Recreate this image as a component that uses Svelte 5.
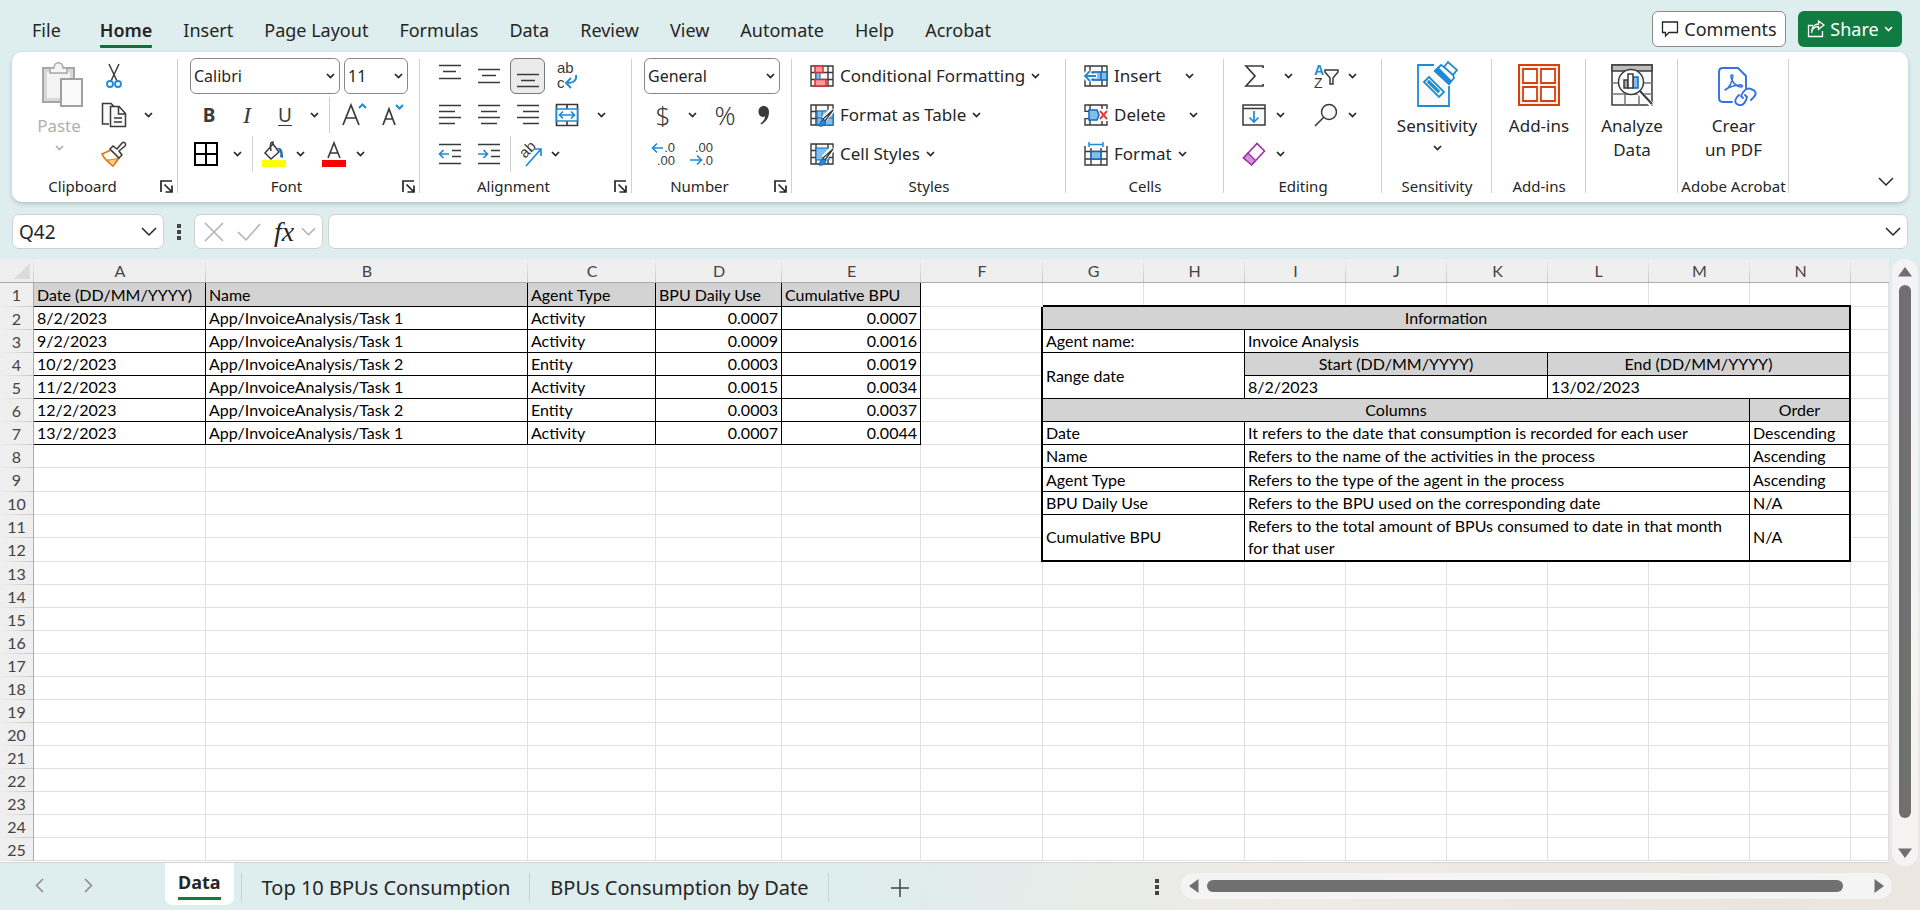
<script lang="ts">
  type Cell = { text?: string; cols?: number; rows?: number; cls?: string };

  const tabs = ['File', 'Home', 'Insert', 'Page Layout', 'Formulas', 'Data', 'Review', 'View', 'Automate', 'Help', 'Acrobat'];
  const letters = ['A', 'B', 'C', 'D', 'E', 'F', 'G', 'H', 'I', 'J', 'K', 'L', 'M', 'N'];
  const sheets = ['Top 10 BPUs Consumption', 'BPUs Consumption by Date'];

  const usage = [
    ['Date (DD/MM/YYYY)', 'Name', 'Agent Type', 'BPU Daily Use', 'Cumulative BPU'],
    ['8/2/2023', 'App/InvoiceAnalysis/Task 1', 'Activity', '0.0007', '0.0007'],
    ['9/2/2023', 'App/InvoiceAnalysis/Task 1', 'Activity', '0.0009', '0.0016'],
    ['10/2/2023', 'App/InvoiceAnalysis/Task 2', 'Entity', '0.0003', '0.0019'],
    ['11/2/2023', 'App/InvoiceAnalysis/Task 1', 'Activity', '0.0015', '0.0034'],
    ['12/2/2023', 'App/InvoiceAnalysis/Task 2', 'Entity', '0.0003', '0.0037'],
    ['13/2/2023', 'App/InvoiceAnalysis/Task 1', 'Activity', '0.0007', '0.0044']
  ];

  function entry(name: string, text: string, order: string, rows = 1): Cell[] {
    const end = rows > 1 ? ' last' : '';
    return [
      { text: name, cols: 2, rows, cls: 'box' + end },
      { text, cols: 5, rows, cls: 'box' + end },
      { text: order, rows, cls: 'box edge' + end }
    ];
  }

  // columns G to N, keyed by row number
  const info: Record<number, Cell[]> = {
    1: letters.slice(6).map(() => ({ cls: 'top' })),
    2: [{ text: 'Information', cols: 8, cls: 'box head mid edge' }],
    3: [
      { text: 'Agent name:', cols: 2, cls: 'box' },
      { text: 'Invoice Analysis', cols: 6, cls: 'box edge' }
    ],
    4: [
      { text: 'Range date', cols: 2, rows: 2, cls: 'box' },
      { text: 'Start (DD/MM/YYYY)', cols: 3, cls: 'box head mid' },
      { text: 'End (DD/MM/YYYY)', cols: 3, cls: 'box head mid edge' }
    ],
    5: [
      { text: '8/2/2023', cols: 3, cls: 'box' },
      { text: '13/02/2023', cols: 3, cls: 'box edge' }
    ],
    6: [
      { text: 'Columns', cols: 7, cls: 'box head mid' },
      { text: 'Order', cls: 'box head mid edge' }
    ],
    7: entry('Date', 'It refers to the date that consumption is recorded for each user', 'Descending'),
    8: entry('Name', 'Refers to the name of the activities in the process', 'Ascending'),
    9: entry('Agent Type', 'Refers to the type of the agent in the process', 'Ascending'),
    10: entry('BPU Daily Use', 'Refers to the BPU used on the corresponding date', 'N/A'),
    11: entry('Cumulative BPU', 'Refers to the total amount of BPUs consumed to date in that month for that user', 'N/A', 2),
    12: []
  };

  function cellsFor(row: number): Cell[] {
    const left: Cell[] = letters.slice(0, 5).map((_, i) => {
      const text = usage[row - 1]?.[i];
      if (!text) return {};
      return { text, cls: 'box' + (row === 1 ? ' head' : i > 2 ? ' num' : '') };
    });
    left.push({ cls: row > 1 && row < 13 ? 'edge side' : '' });
    return [...left, ...(info[row] ?? letters.slice(6).map(() => ({}))), {}];
  }

  const rows = Array.from({ length: 25 }, (_, i) => i + 1);
</script>

{#snippet chevron()}
  <svg class="chev" width="9" height="6" viewBox="0 0 9 6"><path d="M1 1l3.5 3.5L8 1" /></svg>
{/snippet}

{#snippet bigChevron()}
  <svg class="chev" width="16" height="9" viewBox="0 0 16 9"><path d="M1 1l7 7 7-7" /></svg>
{/snippet}

{#snippet more(label: string)}
  <button class="drop" aria-label={label}>{@render chevron()}</button>
{/snippet}

{#snippet lines(label: string, d: string, active = false)}
  <button class="tool wide" class:active aria-label={label}>
    <svg width="24" height="24" viewBox="0 0 24 24" class="dark"><path {d} /></svg>
  </button>
{/snippet}

{#snippet footer(name: string, launcher = false)}
  <div class="footer">
    <span>{name}</span>
    {#if launcher}
      <button class="launch" aria-label="{name} settings">
        <svg width="13" height="13" viewBox="0 0 13 13"><path d="M1 12V1h11M4.500 4.500l7 7M12 5.500V12H5.500" fill="none" stroke="#262626" stroke-width="1.700" /></svg>
      </button>
    {/if}
  </div>
{/snippet}

{#snippet gridBase()}
  <path d="M1 2h22v20H1zM1 8.500h22M1 15.500h22M6 2v20M18 2v20" fill="#fafafa" stroke="#3b3a39" stroke-width="1.400" />
{/snippet}

{#snippet brush()}
  <path d="M23 6L14 16" stroke="#fff" stroke-width="6" />
  <path d="M23 7l-8 11-2-2z" fill="#fff" stroke="#3b3a39" stroke-width="1.300" />
  <path d="M8 22c3-1 2-5 5-5s4 5-1 6c-2 .5-4 0-4-1z" fill="#2b88d8" stroke="#0f5ea8" />
{/snippet}

<div class="app">
  <header class="tabs">
    <nav>
      {#each tabs as tab}
        <a href="#{tab}" class:current={tab === 'Home'}>{tab}</a>
      {/each}
    </nav>
    <button class="comments">
      <svg width="18" height="18" viewBox="0 0 18 18"><path d="M1.500 2h15v10.500H8L4.500 16v-3.500h-3z" fill="none" stroke="#262626" stroke-width="1.300" /></svg>
      Comments
    </button>
    <button class="share">
      <svg width="18" height="18" viewBox="0 0 18 18"><path d="M6 5.500H1.500v11h14V11M4.500 13c.5-4.500 3-6.500 7-6.500V9.500L17 5l-5.500-4v3C7 4 4.500 8 4.500 13z" fill="none" stroke="#fff" stroke-width="1.300" /></svg>
      Share
      {@render chevron()}
    </button>
  </header>

  <section class="ribbon">
    <div class="group clipboard">
      <div class="body pair">
        <button class="big paste" disabled>
          <svg width="48" height="48" viewBox="-6 0 48 48">
            <path d="M2 8h31v34H2z" fill="#d8d8d8" stroke="#a6a6a6" stroke-width="2" />
            <path d="M6 12h23v26H6z" fill="#f3f3f3" />
            <path d="M9 13V8h4c0-7 9-7 9 0h4v5z" fill="#f5f5f5" stroke="#a6a6a6" stroke-width="1.500" />
            <path d="M20 19h21v27H20z" fill="#fafafa" stroke="#a0a0a0" stroke-width="2" />
          </svg>
          Paste
          {@render chevron()}
        </button>
        <div>
          <div class="row">
            <button class="tool wide" aria-label="Cut">
              <svg width="24" height="26" viewBox="0 0 24 26" fill="none" stroke-width="1.500"><path d="M7 1l8 17M17 1L9 18" stroke="#3b3a39" /><circle cx="8" cy="21" r="3" stroke="#1f8ad6" stroke-width="1.800" /><circle cx="16" cy="21" r="3" stroke="#1f8ad6" stroke-width="1.800" /></svg>
            </button>
          </div>
          <div class="row">
            <button class="tool wide" aria-label="Copy">
              <svg width="26" height="26" viewBox="0 0 26 26" fill="#fafafa" stroke="#3b3a39" stroke-width="1.500"><path d="M8 22H1.500V1.500H10l3 3" /><path d="M9.500 4.500H18l6.500 7v13h-15zM17.500 5v7h7M13 16h8M13 20h8" /></svg>
            </button>
            <span class="lead-xs"></span>
            {@render more('Copy options')}
          </div>
          <div class="row">
            <button class="tool wide" aria-label="Format Painter">
              <svg width="26" height="26" viewBox="0 0 26 26"><path d="M1 13l9-4 8 8-6 8C7 21 3 18 1 13z" fill="#fff" stroke="#e07716" stroke-width="1.700" /><path d="M6 19c5 0 8-1 11-2l-5 8z" fill="#fbd08a" stroke="#e07716" /><path d="M9 8l3-3 4 3 5-6c2-2 5 1 3 3l-6 5 3 4-3 3z" fill="#fafafa" stroke="#3b3a39" stroke-width="1.500" /></svg>
            </button>
          </div>
        </div>
      </div>
      {@render footer('Clipboard', true)}
    </div>

    <div class="group font">
      <div class="body">
        <div class="row combos">
          <label class="combo family"><select aria-label="Font"><option>Calibri</option></select>{@render chevron()}</label>
          <label class="combo size"><select aria-label="Font size"><option>11</option></select>{@render chevron()}</label>
        </div>
        <div class="row">
          <button class="tool letter bold">B</button>
          <button class="tool letter italic">I</button>
          <button class="tool letter under">U</button>
          {@render more('Underline options')}
          <i class="bar"></i>
          <button class="tool" aria-label="Grow font">
            <svg width="26" height="26" viewBox="0 0 26 26" fill="none" stroke-width="1.700"><path d="M2 23L10 3l8 20M5 16h10" stroke="#3b3a39" /><path d="M18 6l3.500-3.500L25 6" stroke="#1f8ad6" stroke-width="2" /></svg>
          </button>
          <button class="tool" aria-label="Shrink font">
            <svg width="26" height="26" viewBox="0 0 26 26" fill="none" stroke-width="1.700"><path d="M4 23l6-16 6 16M6 17h8" stroke="#3b3a39" /><path d="M17 3l3.500 3.500L24 3" stroke="#1f8ad6" stroke-width="2" /></svg>
          </button>
        </div>
        <div class="row">
          <button class="tool narrow" aria-label="Borders">
            <svg width="24" height="24" viewBox="0 0 24 24"><path d="M1 1h22v22H1zM12 1v22M1 12h22" fill="none" stroke="#000" stroke-width="2" /></svg>
          </button>
          <span class="lead-xs"></span>
          {@render more('Border options')}
          <i class="bar"></i>
          <button class="tool narrow" aria-label="Fill color">
            <svg width="26" height="26" viewBox="0 0 26 26"><path d="M12 3L4 12l6 6 8-7-6-8M12 3V1c-3 0-3 3-2 9" fill="#fafafa" stroke="#3b3a39" stroke-width="1.500" /><path d="M16 7c5-1 6 3 6 10l-3-1c1-4 0-7-3-9z" fill="#1f6fb5" /><path d="M1 19h24v7H1z" fill="#ff0" /></svg>
          </button>
          {@render more('Fill options')}
          <span class="lead-s"></span>
          <button class="tool narrow" aria-label="Font color">
            <svg width="26" height="26" viewBox="0 0 26 26"><path d="M7 17l6-15 6 15M9 12h8" fill="none" stroke="#3b3a39" stroke-width="1.600" /><path d="M1 19h24v7H1z" fill="#f00" /></svg>
          </button>
          {@render more('Font color options')}
        </div>
      </div>
      {@render footer('Font', true)}
    </div>

    <div class="group alignment">
      <div class="body">
        <div class="row">
          {@render lines('Top align', 'M1 1.500h22M5 7.500h13M1 14.500h22')}
          {@render lines('Middle align', 'M1 5.500h22M5 11.500h14M1 18.500h22')}
          {@render lines('Bottom align', 'M1 10.500h22M5 16.500h14M1 22.500h22', true)}
          <button class="tool wide" aria-label="Wrap text">
            <svg width="26" height="30" viewBox="0 0 26 30"><text x="3" y="12" class="glyph">ab</text><text x="3" y="27" class="glyph">c</text><path d="M22 14c1 5-2 8-9 8M17 17l-5 5 5 5" fill="none" stroke="#1f8ad6" stroke-width="1.900" /></svg>
          </button>
        </div>
        <div class="row">
          {@render lines('Align left', 'M1 2.500h22M1 8.500h16M1 14.500h22M1 20.500h16')}
          {@render lines('Center', 'M1 2.500h22M4 8.500h16M1 14.500h22M4 20.500h16')}
          {@render lines('Align right', 'M1 2.500h22M7 8.500h16M1 14.500h22M7 20.500h16')}
          <button class="tool wide" aria-label="Merge and center">
            <svg width="24" height="24" viewBox="0 0 24 24" fill="none" stroke-width="1.700"><path d="M1.500 1.500h21v21h-21zM12 1v5M12 18v5" stroke="#3b3a39" /><path d="M1.500 6h21v12h-21z" fill="#fff" stroke="#1f8ad6" /><path d="M4.500 12h15M8 8.500L4.500 12 8 15.500M16 8.500l3.500 3.500-3.500 3.500" stroke="#1f8ad6" /></svg>
          </button>
          <span class="lead-xs"></span>
          {@render more('Merge options')}
        </div>
        <div class="row">
          <button class="tool wide" aria-label="Decrease indent">
            <svg width="24" height="24" viewBox="0 0 24 24" class="dark"><path d="M1 2.500h22M14 8.500h9M14 14.500h9M1 21.500h22" /><path d="M2 12h9M5.500 8L1.500 12l4 4" class="blue" /></svg>
          </button>
          <button class="tool wide" aria-label="Increase indent">
            <svg width="24" height="24" viewBox="0 0 24 24" class="dark"><path d="M1 2.500h22M14 8.500h9M14 14.500h9M1 21.500h22" /><path d="M1 12h9M6.500 8l4 4-4 4" class="blue" /></svg>
          </button>
          <i class="bar tight"></i>
          <button class="tool narrow" aria-label="Orientation">
            <svg width="26" height="26" viewBox="0 0 26 26"><text x="0" y="0" class="glyph" transform="translate(9 18) rotate(-45)">ab</text><path d="M10 25L25 8M18 8h7v7" fill="none" stroke="#1f8ad6" stroke-width="1.700" /></svg>
          </button>
          {@render more('Orientation options')}
        </div>
      </div>
      {@render footer('Alignment', true)}
    </div>

    <div class="group number">
      <div class="body">
        <div class="row combos">
          <label class="combo format"><select aria-label="Number format"><option>General</option></select>{@render chevron()}</label>
        </div>
        <div class="row">
          <button class="tool symbol">$</button>
          {@render more('Accounting options')}
          <button class="tool percent symbol">%</button>
          <button class="tool narrow" aria-label="Comma style">
            <svg width="14" height="22" viewBox="0 0 14 22"><path d="M6.500 2c3.500 0 5.500 2.500 5.500 6 0 6-3 10-8 12.500l-.5-1c2.500-2 4.500-4.500 4.500-7C4 14 1.500 11 1.500 7.500c0-3 2-5.500 5-5.500z" fill="#3b3a39" /></svg>
          </button>
        </div>
        <div class="row">
          <button class="tool" aria-label="Increase decimal">
            <svg width="26" height="28" viewBox="0 0 26 28"><text x="25" y="12" class="digits">.0</text><text x="25" y="25" class="digits">.00</text><path d="M2 8h11M7 3.500L2.500 8 7 12.500" fill="none" stroke="#1f8ad6" stroke-width="1.700" /></svg>
          </button>
          <button class="tool" aria-label="Decrease decimal">
            <svg width="26" height="28" viewBox="0 0 26 28"><text x="25" y="12" class="digits">.00</text><text x="25" y="25" class="digits">.0</text><path d="M2 20h11M9 15.500l4.500 4.500L9 24.500" fill="none" stroke="#1f8ad6" stroke-width="1.700" /></svg>
          </button>
        </div>
      </div>
      {@render footer('Number', true)}
    </div>

    <div class="group styles">
      <div class="body">
        <div class="row">
          <button class="text">
            <svg width="24" height="24" viewBox="0 0 24 24">{@render gridBase()}<path d="M6 8.500h4v7H6z" fill="#83beec" stroke="#0f6cbd" /><path d="M5 2h8v6.500H5zM5 15.500h11V22H5z" fill="#ff9a9a" stroke="#d92c2c" stroke-width="1.500" /></svg>
            Conditional Formatting {@render chevron()}
          </button>
        </div>
        <div class="row">
          <button class="text">
            <svg width="24" height="24" viewBox="0 0 24 24">{@render gridBase()}<path d="M7 8h16v14H7z" fill="#83beec" stroke="#0f6cbd" /><path d="M12 8v14M7 15h16" stroke="#0f6cbd" />{@render brush()}</svg>
            Format as Table {@render chevron()}
          </button>
        </div>
        <div class="row">
          <button class="text">
            <svg width="24" height="24" viewBox="0 0 24 24">{@render gridBase()}<path d="M6 6h13v12H6z" fill="#83beec" stroke="#0f6cbd" />{@render brush()}</svg>
            Cell Styles {@render chevron()}
          </button>
        </div>
      </div>
      {@render footer('Styles')}
    </div>

    <div class="group cells">
      <div class="body">
        <div class="row">
          <button class="text">
            <svg width="24" height="24" viewBox="0 0 24 24">{@render gridBase()}<path d="M9 8h14v8H9zM17 8v8" fill="#83beec" stroke="#0f6cbd" stroke-width="1.500" /><path d="M1 12h12M6 6.500L.5 12 6 17.500" fill="none" stroke="#fff" stroke-width="5" /><path d="M1 12h11M6 7l-5 5 5 5" fill="none" stroke="#1f8ad6" stroke-width="1.800" /></svg>
            Insert
          </button>
          <span class="lead">{@render more('Insert options')}</span>
        </div>
        <div class="row">
          <button class="text">
            <svg width="24" height="24" viewBox="0 0 24 24">{@render gridBase()}<path d="M14 6h10v12H14z" fill="#fff" /><path d="M0 9h5v6H0z" fill="#fff" /><path d="M5 7h8l2 5-2 5H5z" fill="#83beec" stroke="#0f6cbd" stroke-width="1.500" /><path d="M16 8l7 8M23 8l-7 8" stroke="#e23b3b" stroke-width="1.900" /></svg>
            Delete
          </button>
          <span class="lead">{@render more('Delete options')}</span>
        </div>
        <div class="row">
          <button class="text">
            <svg width="24" height="24" viewBox="0 0 24 24"><path d="M1 4v19h22V4M1 9.500h22M1 17h22M7 6v17M17 6v17" fill="none" stroke="#3b3a39" stroke-width="1.400" /><path d="M7 9.500h10V17H7z" fill="#83beec" stroke="#0f6cbd" stroke-width="1.500" /><path d="M5 0v5M19 0v5M5 2.500h14" stroke="#1f8ad6" stroke-width="1.500" /></svg>
            Format {@render chevron()}
          </button>
        </div>
      </div>
      {@render footer('Cells')}
    </div>

    <div class="group editing">
      <div class="body pair">
        <div class="first">
          <div class="row">
            <button class="tool narrow" aria-label="AutoSum">
              <svg width="24" height="24" viewBox="0 0 24 24"><path d="M21 4V2H4l9 10-9 10h17v-2" fill="none" stroke="#3b3a39" stroke-width="1.700" /></svg>
            </button>
            <span class="lead-s"></span>
            {@render more('AutoSum options')}
          </div>
          <div class="row">
            <button class="tool narrow" aria-label="Fill">
              <svg width="24" height="24" viewBox="0 0 24 24"><path d="M1 2h22v20H1zM1 5.500h22" fill="#fafafa" stroke="#3b3a39" stroke-width="1.500" /><path d="M12 8v11M7.500 14.500L12 19l4.500-4.500" fill="none" stroke="#1f8ad6" stroke-width="1.700" /></svg>
            </button>
            {@render more('Fill options')}
          </div>
          <div class="row">
            <button class="tool narrow" aria-label="Clear">
              <svg width="24" height="24" viewBox="0 0 24 24"><path d="M1.500 16L15 1.500 22.500 9 10 22.500z" fill="#fafafa" stroke="#9b30a8" stroke-width="1.600" /><path d="M1.500 16L6 11l7.500 7.500L9.500 23z" fill="#d391db" stroke="#9b30a8" stroke-width="1.400" /></svg>
            </button>
            {@render more('Clear options')}
          </div>
        </div>
        <div>
          <div class="row">
            <button class="tool narrow" aria-label="Sort and filter">
              <svg width="26" height="28" viewBox="0 0 26 28"><text x="1" y="13" class="az a">A</text><text x="1" y="26" class="az">Z</text><path d="M12 8h13v2l-5 6v6h-3v-6l-5-6z" fill="#fafafa" stroke="#3b3a39" stroke-width="1.500" /></svg>
            </button>
            {@render more('Sort options')}
          </div>
          <div class="row">
            <button class="tool narrow" aria-label="Find">
              <svg width="24" height="24" viewBox="0 0 24 24"><circle cx="15" cy="9" r="7.500" fill="#fafafa" stroke="#3b3a39" stroke-width="1.500" /><path d="M10 14L1 23" stroke="#3b3a39" stroke-width="1.600" /></svg>
            </button>
            {@render more('Find options')}
          </div>
        </div>
      </div>
      {@render footer('Editing')}
    </div>

    <div class="group sensitivity">
      <div class="body">
        <button class="big">
          <svg width="42" height="48" viewBox="0 0 42 48" fill="none" stroke="#1f8ad6" stroke-width="1.800"><path d="M18 5H2v41h31V26" fill="#fafafa" /><path d="M8 22l5-5 15 15-5 5zM12 22l10 10 1-1-10-10z" /><path d="M19 11l6-6 3 2 4-5 9 8-4 5 1 3-5 6z" fill="#fff" /><path d="M19 11l14 13 2-3L22 8z" fill="#1f8ad6" /><path d="M28 7l9 8" /></svg>
          Sensitivity
          {@render chevron()}
        </button>
      </div>
      {@render footer('Sensitivity')}
    </div>

    <div class="group addins">
      <div class="body">
        <button class="big">
          <svg width="42" height="48" viewBox="0 0 42 48"><path d="M1 5h40v40H1z" fill="#fdf1ea" stroke="#d8400f" stroke-width="2" /><path d="M5 9h14v14H5zM23 9h14v14H23zM5 27h14v14H5zM23 27h14v14H23z" fill="#fff" stroke="#d8400f" stroke-width="1.800" /></svg>
          Add-ins
        </button>
      </div>
      {@render footer('Add-ins')}
    </div>

    <div class="group analyze">
      <div class="body">
        <button class="big">
          <svg width="42" height="48" viewBox="0 0 42 48" stroke="#3b3a39" stroke-width="1.500"><path d="M1 5h40v40H1z" fill="#fafafa" /><path d="M1 5h40v6H1z" fill="#bdbdbd" /><path d="M1 23h40M1 34h40M14 34v11M28 34v11" stroke="#777" /><path d="M27 31l14 14" stroke="#fff" stroke-width="5" /><circle cx="20" cy="22" r="12.500" fill="#fff" /><path d="M29 31l12 13" stroke-width="2" /><path d="M13 20h4v8h-4z" fill="#a9a9a9" /><path d="M22 17h5v11h-5z" fill="#83beec" stroke="#0f6cbd" /><path d="M17 14h5v14h-5z" fill="#fff" /></svg>
          Analyze<br />Data
        </button>
      </div>
    </div>

    <div class="group acrobat">
      <div class="body">
        <button class="big">
          <svg width="48" height="48" viewBox="-6 0 48 48" fill="none" stroke="#3371e3" stroke-width="1.900" stroke-linecap="round"><path d="M16 42H7c-3 0-4-1-4-4V12c0-3 1-4 4-4h15l8 8v12" /><path d="M9 30c4-1 7-8 8-14 0-2-3-1-2 1 1 5 5 9 10 10 3 0 1-3-2-2-5 0-9 2-13 4" stroke-width="1.500" /><path d="M27 38l-2-2c2-5 6-9 10-7 5 2 6 4 3 8l-3 3M29 35l2 2c-1 5-4 9-8 8-4-1-5-4-2-8l2-2" /></svg>
          Crear<br />un PDF
        </button>
      </div>
      {@render footer('Adobe Acrobat')}
    </div>
    <button class="collapse" aria-label="Collapse ribbon">{@render bigChevron()}</button>
  </section>

  <section class="formula">
    <label class="field name"><input aria-label="Name box" value="Q42" />{@render bigChevron()}</label>
    <svg class="dots" width="4" height="16" viewBox="0 0 4 16"><path d="M0 0h4v4H0zM0 6h4v4H0zM0 12h4v4H0z" /></svg>
    <div class="field actions">
      <button class="faint" aria-label="Cancel"><svg width="20" height="20" viewBox="0 0 20 20"><path d="M1 1l18 18M19 1L1 19" /></svg></button>
      <button class="faint" aria-label="Enter"><svg width="24" height="18" viewBox="0 0 24 18"><path d="M1 9l8 8L23 1" /></svg></button>
      <button class="fx">fx</button>
      <button class="faint" aria-label="Function list"><svg width="15" height="9" viewBox="0 0 16 9"><path d="M1 1l7 7 7-7" /></svg></button>
    </div>
    <label class="field value"><input aria-label="Formula" />{@render bigChevron()}</label>
  </section>

  <main>
    <div class="sheet">
      <table>
        <colgroup>
          <col class="c-index" /><col class="c-a" /><col class="c-b" /><col class="c-c" /><col class="c-d" /><col class="c-e" /><col class="c-f" />
          {#each letters.slice(6) as _}<col class="c-rest" />{/each}
          <col />
        </colgroup>
        <thead>
          <tr>
            <th class="corner"><svg width="16" height="16" viewBox="0 0 16 16"><path d="M16 0v16H0z" fill="#dcdcdc" /></svg></th>
            {#each letters as letter}<th>{letter}</th>{/each}
            <th class="end"></th>
          </tr>
        </thead>
        <tbody>
          {#each rows as row}
            <tr class:tall={[1, 9, 12].includes(row)}>
              <th>{row}</th>
              {#each cellsFor(row) as cell}
                <td class={cell.cls} colspan={cell.cols ?? 1} rowspan={cell.rows ?? 1}>{cell.text ?? ''}</td>
              {/each}
            </tr>
          {/each}
        </tbody>
      </table>
    </div>
    <div class="scroll vertical">
      <svg width="14" height="10" viewBox="0 0 14 10"><path d="M7 0l7 9.500H0z" /></svg>
      <div class="thumb"></div>
      <svg width="14" height="10" viewBox="0 0 14 10"><path d="M7 10L0 .5h14z" /></svg>
    </div>
  </main>

  <footer class="sheets">
    <div class="arrows">
      <button aria-label="Previous sheet"><svg width="9" height="15" viewBox="0 0 9 15"><path d="M8 1L1.500 7.500 8 14" /></svg></button>
      <button aria-label="Next sheet"><svg width="9" height="15" viewBox="0 0 9 15"><path d="M1 1l6.500 6.500L1 14" /></svg></button>
    </div>
    <button class="sheet-tab current"><span>Data</span></button>
    {#each sheets as name}
      <button class="sheet-tab">{name}</button>
    {/each}
    <button class="add" aria-label="New sheet"><svg width="18" height="18" viewBox="0 0 18 18"><path d="M9 0v18M0 9h18" stroke="#444" stroke-width="1.500" /></svg></button>
    <svg class="dots" width="4" height="16" viewBox="0 0 4 16"><path d="M0 0h4v4H0zM0 6h4v4H0zM0 12h4v4H0z" /></svg>
    <div class="scroll horizontal">
      <svg width="10" height="14" viewBox="0 0 10 14"><path d="M0 7l9.500-7v14z" /></svg>
      <div class="thumb"></div>
      <svg width="10" height="14" viewBox="0 0 10 14"><path d="M10 7L.5 0v14z" /></svg>
    </div>
  </footer>
</div>

<style>
  :global(body) { margin: 0; }
  .app {
    min-height: 100vh;
    background: radial-gradient(ellipse 900px 500px at 92% 100%, #ebe5e0 0%, #eeeae5 55%, #deeded 100%) #deeded;
    font-family: "Noto Sans", "Open Sans", sans-serif;
    font-size: 17px;
    color: #262626;
  }
  .app, .app * { box-sizing: border-box; }
  button { border: 0; padding: 0; background: none; font: inherit; color: inherit; }
  svg { flex: none; overflow: visible; }
  .chev { fill: none; stroke: #262626; stroke-width: 1.7; }

  .tabs { display: flex; height: 52px; padding: 11px 18px 0 32px; font-size: 18px; }
  nav { display: flex; gap: 31px; flex: 1; }
  nav a { height: 37px; line-height: 39px; color: inherit; text-decoration: none; white-space: nowrap; }
  nav a:first-child { margin-right: 8px; }
  nav a.current { font-weight: 600; border-bottom: 3px solid #0f703b; border-radius: 1px; }
  .comments, .share { display: flex; align-items: center; justify-content: center; gap: 5px; height: 36px; border-radius: 6px; }
  .comments { width: 134px; margin-right: 12px; background: #fff; border: 1px solid #8a8a8a; }
  .share { width: 104px; background: #107c41; color: #fff; }
  .share :global(.chev) { stroke: #fff; }

  .ribbon {
    display: flex;
    margin: 0 12px;
    height: 150px;
    background: #fff;
    border-radius: 10px;
    box-shadow: 0 2px 4px rgba(0, 60, 60, 0.22);
  }
  .group {
    display: flex;
    flex-direction: column;
    flex: none;
    background: linear-gradient(#d0d0d0, #d0d0d0) right 0 top 7px / 1px 134px no-repeat;
  }
  .clipboard { width: 166px; }
  .font { width: 242px; }
  .alignment { width: 212px; }
  .number { width: 160px; }
  .styles { width: 274px; }
  .cells { width: 158px; }
  .editing { width: 158px; }
  .sensitivity { width: 110px; }
  .addins { width: 94px; }
  .analyze { width: 92px; }
  .acrobat { width: 111px; }
  .body { height: 121px; padding: 4px 0 0 12px; }
  .alignment .body { padding-left: 10px; }
  .styles .body, .cells .body { padding-left: 18px; }
  .editing .body { padding-left: 14px; }
  .sensitivity .body, .addins .body, .analyze .body, .acrobat .body { padding-left: 0; }
  .pair { display: flex; align-items: flex-start; }
  .first { width: 72px; }
  .row { display: flex; align-items: center; height: 39px; }
  .tool { display: flex; align-items: center; justify-content: center; width: 38px; height: 36px; border-radius: 6px; }
  .wide { width: 39px; }
  .narrow { width: 32px; }
  .percent { width: 46px; }
  .active { background: #ebebeb; border: 1px solid #777; width: 35px; margin: 0 2px; }
  .drop { display: flex; align-items: center; justify-content: center; width: 20px; height: 36px; }
  .lead-s { width: 8px; }
  .lead-xs { width: 5px; }
  .bar { width: 1px; height: 36px; margin: 0 5px; background: #d0d0d0; }
  .bar.tight { margin: 0 2px; }
  .letter { font-size: 19px; line-height: 24px; color: #3b3a39; }
  .bold { font-weight: 700; }
  .italic { font-family: "Liberation Serif", serif; font-style: italic; font-size: 24px; }
  .under { text-decoration: underline; text-underline-offset: 3px; text-decoration-thickness: 1px; }
  .symbol { font-size: 26px; line-height: 30px; color: #3b3a39; font-weight: 300; }
  .dark { fill: none; stroke: #3b3a39; stroke-width: 1.6; }
  .blue { stroke: #1f8ad6; stroke-width: 1.7; }
  .glyph { font-family: "Liberation Sans", sans-serif; font-size: 15px; fill: #3b3a39; }
  .digits { font-family: "Liberation Sans", sans-serif; font-size: 13px; fill: #3b3a39; text-anchor: end; }
  .az { font-family: "Liberation Sans", sans-serif; font-size: 14px; fill: #3b3a39; }
  .az.a { fill: #1f8ad6; font-weight: 700; }

  .combos { gap: 4px; }
  .combo { position: relative; display: block; height: 36px; }
  .combo select {
    appearance: none;
    width: 100%;
    height: 100%;
    padding: 0 3px;
    border: 1px solid #888;
    border-radius: 6px;
    background: #fff;
    font: inherit;
    font-size: 16px;
    color: #262626;
  }
  .combo :global(.chev) { position: absolute; right: 5px; top: 15px; }
  .family { width: 150px; }
  .size { width: 64px; }
  .format { width: 136px; }

  .text { display: flex; align-items: center; gap: 6px; white-space: nowrap; }
  .lead { padding-left: 18px; }
  .big { display: block; width: 100%; line-height: 24px; text-align: center; }
  .big svg { display: block; margin: 4px auto 6px; }
  .big :global(.chev) { margin: 7px auto 0; }
  .paste { width: 70px; color: #b0b0b0; }
  .paste :global(.chev) { stroke: #b0b0b0; }
  .footer { display: flex; align-items: center; height: 26px; font-size: 15px; text-align: center; white-space: nowrap; }
  .footer span { flex: 1; }
  .launch { width: 24px; height: 13px; margin-right: 1px; padding-left: 7px; }
  .launch svg { display: block; }
  .collapse { margin-left: auto; align-self: flex-end; padding: 14px; line-height: 16px; }
  .collapse :global(.chev), .field :global(.chev) { stroke-width: 1.5; }

  .formula { display: flex; align-items: center; height: 57px; padding: 2px 12px 0; }
  .field { display: flex; align-items: center; height: 35px; background: #fff; border: 1px solid #d0d0d0; border-radius: 7px; padding: 0 6px; }
  .field input { flex: 1; min-width: 0; border: 0; padding: 0; font: inherit; font-size: 19px; color: #262626; background: none; outline: 0; }
  .name { width: 152px; }
  .formula .dots { margin: 0 13px; }
  .dots { fill: #444; }
  .actions { width: 129px; margin-right: 5px; padding: 0 2px 0 9px; gap: 13px; }
  .faint svg { display: block; fill: none; stroke: #b0b0b0; stroke-width: 1.5; }
  .faint:last-child { margin-left: -6px; }
  .fx { font-family: "Liberation Serif", serif; font-style: italic; font-size: 28px; line-height: 32px; color: #262626; }
  .value { flex: 1; }

  main { display: flex; }
  .sheet { flex: 1; min-width: 0; background: #fff; border-bottom: 1px solid #d4d4d4; padding-bottom: 1px; overflow: hidden; }
  table {
    width: 100%;
    table-layout: fixed;
    border-collapse: separate;
    border-spacing: 0;
    font-family: Lato, "Open Sans", sans-serif;
    font-size: 16px;
    line-height: 21px;
    color: #000;
  }
  .c-index { width: 34px; }
  .c-a { width: 172px; }
  .c-b { width: 322px; }
  .c-c { width: 128px; }
  .c-d { width: 126px; }
  .c-e { width: 139px; }
  .c-f { width: 122px; }
  .c-rest { width: 101px; }
  th { padding: 0 0 1px; font-weight: 400; color: #444; height: 23px; }
  thead th { height: 24px; padding: 0; border-bottom: 1px solid #ababab; background: linear-gradient(#efefef, #c8c8c8) right / 1px 100% no-repeat #efefef; }
  thead .end { background: #efefef; }
  .corner svg { display: block; margin: 0 4px 0 auto; }
  tbody th { border-right: 1px solid #ababab; background: linear-gradient(90deg, #efefef, #c8c8c8) bottom / 100% 1px no-repeat #efefef; }
  td { height: 23px; padding: 0 3px 1px; border-right: 1px solid #e0e0e0; border-bottom: 1px solid #e0e0e0; }
  .tall th, .tall td { height: 24px; }
  td.box { border-color: #000; }
  td.head { background: #d3d3d3; }
  td.mid { text-align: center; }
  td.num { text-align: right; }
  td.edge { border-right: 2px solid #000; }
  /* grid lines painted as backgrounds so the thick frame stays unbroken */
  td.side { border-bottom: 0; background: linear-gradient(#e0e0e0, #e0e0e0) bottom / 100% 1px no-repeat; }
  td.top { border-right: 0; border-bottom: 2px solid #000; background: linear-gradient(#e0e0e0, #e0e0e0) right / 1px 100% no-repeat; }
  td.last { border-bottom: 2px solid #000; line-height: 22px; }

  .scroll { display: flex; align-items: center; background: #f4f4f4; border-radius: 13px; fill: #6f6f6f; }
  .thumb { background: #707070; border-radius: 6px; }
  .vertical { flex-direction: column; width: 26px; margin: 0 2px -3px 3px; padding: 8px 0; }
  .vertical .thumb { width: 12px; flex: 1; margin: 8px 0 30px; }
  .horizontal { width: 711px; height: 26px; margin: 10px 28px 0 22px; padding: 0 8px; }
  .horizontal .thumb { height: 12px; flex: 1; margin: 0 31px 0 8px; }

  .sheets { display: flex; align-items: flex-start; height: 47px; font-size: 20px; white-space: nowrap; }
  .arrows { display: flex; gap: 40px; width: 165px; padding: 15px 0 0 35px; }
  .arrows svg { display: block; fill: none; stroke: #8a8a8a; stroke-width: 1.5; }
  .sheet-tab { height: 29px; margin-top: 10px; padding: 0 19px 0 20px; line-height: 28px; border-right: 1px solid #c8d2d2; }
  .sheet-tab.current { height: 42px; margin: 0; padding: 0 13px; background: #fff; border: 0; border-radius: 0 0 8px 8px; font-size: 18px; font-weight: 700; }
  .sheet-tab.current + .sheet-tab { margin-left: 7px; border-left: 1px solid #c8d2d2; }
  .current span { display: block; height: 32px; line-height: 28px; border-bottom: 3px solid #107c41; }
  .add { padding: 13px 60px 0 62px; }
  .sheets > .dots { margin: 16px 0 0 auto; }
</style>
